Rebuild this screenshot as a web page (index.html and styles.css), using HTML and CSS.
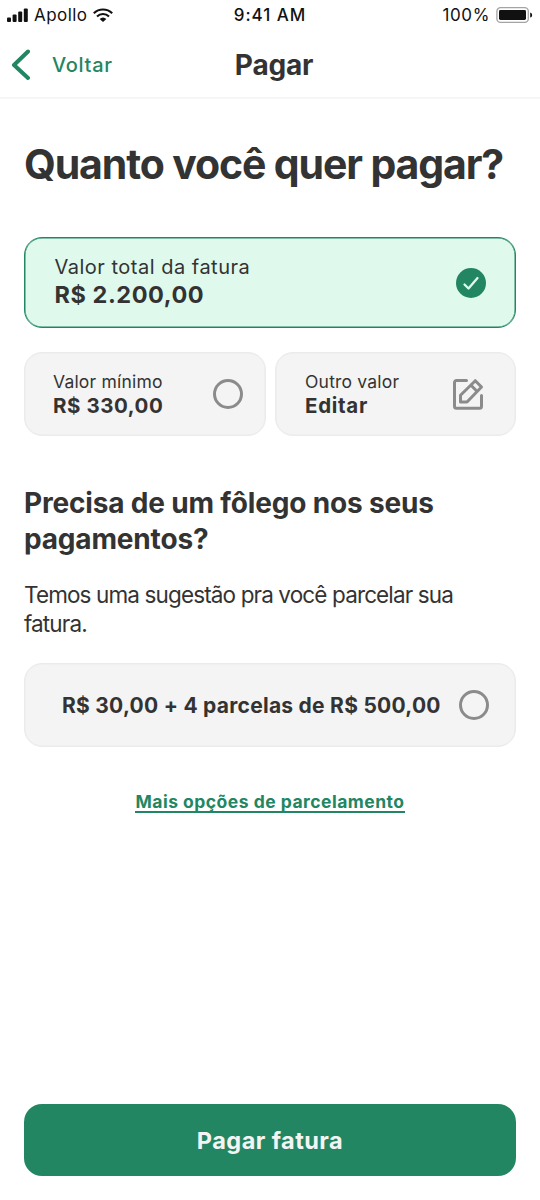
FILE: index.html
```html
<!DOCTYPE html>
<html lang="pt-BR">
<head>
<meta charset="utf-8">
<title>Pagar</title>
<link rel="stylesheet" href="styles.css">
</head>
<body>
<div class="screen">
  <div class="status">
    <div class="status-left">
      <svg class="signal" width="21" height="14" viewBox="0 0 21 14" fill="#111"><rect x="0" y="9.5" width="4" height="4.5" rx="1"/><rect x="5.6" y="6.5" width="4" height="7.5" rx="1"/><rect x="11.2" y="3.5" width="4" height="10.5" rx="1"/><rect x="16.8" y="0.5" width="4" height="13.5" rx="1"/></svg>
      <span class="carrier">Apollo</span>
      <svg class="wifi" width="20" height="14" viewBox="0 0 20 14" fill="none" stroke="#111" stroke-width="2.1"><path d="M.8 5.2a13.2 13.2 0 0 1 18.4 0M4 8.5a8.6 8.6 0 0 1 12 0"/><path d="M6.6 11a5 5 0 0 1 6.8 0L10 14Z" fill="#111" stroke="none"/></svg>
    </div>
    <span class="clock">9:41 AM</span>
    <div class="status-right">
      <span class="percent">100%</span>
      <svg width="37" height="16" viewBox="0 0 37 16"><rect x=".9" y=".7" width="31.4" height="14.6" rx="3.6" fill="#fff" stroke="#a4a4a4" stroke-width="1.3"/><rect x="3" y="3" width="27" height="10" rx="1.4" fill="#111"/><path d="M34.2 5.4c2.6.9 2.6 4.3 0 5.2Z" fill="#111"/></svg>
    </div>
  </div>
  <header class="nav">
    <a class="back">
      <svg width="20" height="32" viewBox="0 0 20 32" fill="none" stroke="#228662" stroke-width="4" stroke-linecap="round" stroke-linejoin="round"><path d="M17 2.500 3 16 17 29"/></svg>
      <span class="back-label">Voltar</span>
    </a>
    <span class="nav-title">Pagar</span>
  </header>
  <main class="content">
    <h1 class="title">Quanto você quer pagar?</h1>
    <div class="card card-total">
      <div class="info">
        <span class="label-lg">Valor total da fatura</span>
        <strong class="value-lg">R$ 2.200,00</strong>
      </div>
      <svg width="30" height="30" viewBox="0 0 30 30"><circle cx="15" cy="15" r="15" fill="#228662"/><path d="m8.500 16.500 4 4L21.500 10" fill="none" stroke="#dff9ed" stroke-width="2.300" stroke-linecap="round" stroke-linejoin="round"/></svg>
    </div>
    <div class="pair">
      <div class="card card-small">
        <div class="info">
          <span class="label">Valor mínimo</span>
          <strong class="value value-min">R$ 330,00</strong>
        </div>
        <span class="radio"></span>
      </div>
      <div class="card card-small card-edit">
        <div class="info">
          <span class="label label-other">Outro valor</span>
          <strong class="value value-edit">Editar</strong>
        </div>
        <svg width="32" height="32" viewBox="0 0 32 32" fill="none" stroke="#8b8b8b" stroke-width="3" stroke-linecap="butt" stroke-linejoin="round"><path d="M14.500 2.500H4.500a2 2 0 0 0-2 2v23.700a2 2 0 0 0 2 2h23a2 2 0 0 0 2-2V17.500" stroke-linecap="round"/><path d="M8.500 24V17.200L23.300 2.700l6.200 6.300L15 24ZM19 7.200l6.200 6.300"/></svg>
      </div>
    </div>
    <h2 class="subtitle">Precisa de um fôlego nos seus<br>pagamentos?</h2>
    <p class="text">Temos uma sugestão pra você parcelar sua<br>fatura.</p>
    <div class="card card-plan">
      <strong class="plan">R$ 30,00 + 4 parcelas de R$ 500,00</strong>
      <span class="radio"></span>
    </div>
    <a class="more">Mais opções de parcelamento</a>
    <button class="pay" type="button"><span class="pay-label">Pagar fatura</span></button>
  </main>
</div>
</body>
</html>
```
FILE: styles.css
```css
* { box-sizing: border-box; }
body { margin: 0; background: #fff; color: #333; font-family: Inter, "Liberation Sans", sans-serif; }
.screen { width: 540px; height: 1200px; display: flex; flex-direction: column; }
.status { height: 30px; padding: 0 7px 0 7px; display: grid; grid-template-columns: 1fr auto 1fr; align-items: center; color: #111; font-size: 17px; line-height: 30px; white-space: nowrap; }
.status-left { display: flex; align-items: center; }
.carrier { margin-left: 6px; letter-spacing: 0.45px; }
.wifi { margin-left: 6px; }
.clock { font-weight: 500; letter-spacing: 0.95px; }
.percent { letter-spacing: 0.6px; }
.status-right { display: flex; align-items: center; justify-content: flex-end; gap: 6px; }
.nav { height: 69px; border-bottom: 2px solid #f6f6f6; padding: 3px 12px 0 11px; display: grid; grid-template-columns: 1fr auto 1fr; align-items: center; }
.back { display: flex; align-items: center; gap: 21px; color: #228662; font-size: 20px; font-weight: 500; letter-spacing: 0.7px; }
.nav-title { padding-left: 9px; font-size: 28px; font-weight: 700; letter-spacing: -0.2px; }
.content { flex: 1; padding: 0 24px 24px; display: flex; flex-direction: column; }
.title { margin: 40px 0 0; font-size: 41px; line-height: 50px; font-weight: 700; letter-spacing: -1.13px; white-space: nowrap; }
.card { display: flex; align-items: center; justify-content: space-between; border: 1px solid #ebebeb; border-radius: 18px; background: #f4f4f4; box-shadow: inset 0 0 0 0.5px #ebebeb; }
.info { display: flex; flex-direction: column; white-space: nowrap; }
.card-total { height: 91px; margin-top: 48px; padding: 0 29px 4px 29.5px; border-color: #228662; background: #dff9ed; box-shadow: inset 0 0 0 0.5px #228662; }
.card-total svg { margin-top: 4px; }
.label-lg { font-size: 20px; line-height: 28px; letter-spacing: 0.5px; }
.value-lg { font-size: 23.5px; line-height: 27px; font-weight: 700; letter-spacing: 0.55px; }
.pair { margin-top: 24px; display: grid; grid-template-columns: 241.5px 241px; gap: 9.5px; }
.card-small { height: 84px; padding: 0 21.5px 1px 28px; }
.card-edit { padding: 0 31px 1px 29px; }
.label { font-size: 17.5px; line-height: 25px; margin-top: -1px; letter-spacing: 0.2px; }
.value { font-size: 20.5px; line-height: 24px; font-weight: 700; letter-spacing: 0.55px; }
.value-edit { letter-spacing: 0.7px; }
.radio { width: 30px; height: 30px; flex: none; border: 3px solid #8b8b8b; border-radius: 50%; }
.subtitle { margin: 49px 0 0; font-size: 28px; line-height: 36px; font-weight: 700; letter-spacing: -0.17px; white-space: nowrap; }
.text { margin: 24px 0 0; font-size: 22.5px; line-height: 28.5px; letter-spacing: -0.87px; white-space: nowrap; }
.card-plan { height: 84px; margin-top: 25px; padding: 0 26px 0 37px; }
.plan { font-size: 21px; font-weight: 700; letter-spacing: 0.26px; white-space: nowrap; }
.more { align-self: center; margin-top: 45px; font-size: 17.5px; line-height: 19px; font-weight: 700; letter-spacing: 0.49px; color: #228662; border-bottom: 2px solid #228662; }
.pay { margin-top: auto; height: 72px; border: 0; border-radius: 18px; background: #228662; color: #f4f4f4; font: 700 23.5px Inter, sans-serif; letter-spacing: 0.45px; }
```
